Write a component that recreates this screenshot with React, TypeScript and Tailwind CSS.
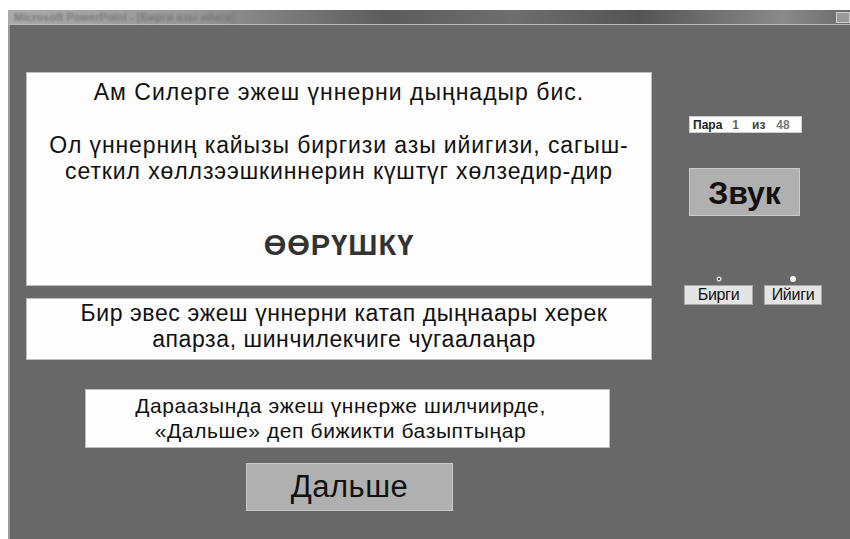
import React from "react";

const font = { fontFamily: '"Liberation Sans", Arial, sans-serif' };

function Panel({ className, children }: { className: string; children: React.ReactNode }) {
  return (
    <div className={`bg-[#fdfdfd] border border-[#bdbdbd] text-[#111] text-center ${className}`}>
      {children}
    </div>
  );
}

export default function App() {
  return (
    <div className="w-[850px] h-[539px] bg-white pt-[10px] pl-[8px] flex flex-col overflow-hidden" style={font}>
      {/* window title bar */}
      <div className="h-[15px] flex items-center bg-[linear-gradient(90deg,#ababab_0%,#979797_22%,#5c5c5c_45%,#6e6e6e_60%,#545454_75%,#8a8a8a_92%,#6a6a6a_100%)] border-b border-[#b8b8b8]">
        <span className="ml-[6px] text-[11px] font-bold text-[#7a7a7a] blur-[1.2px] whitespace-nowrap">
          Microsoft PowerPoint - [Бирги азы ийиги]
        </span>
        <div className="ml-auto w-[14px] h-[11px] bg-[#9a9a9a] border border-[#cfcfcf]" />
      </div>

      {/* slide area */}
      <div className="flex-1 flex bg-[#686868] border-l-2 border-[#9c9c9c] pl-[16px] pt-[47px]">
        <div className="w-[626px] flex flex-col">
          <Panel className="h-[214px] pt-[6px]">
            <p className="text-[23px] leading-[26px] tracking-[1px]">Ам Силерге эжеш үннерни дыңнадыр бис.</p>
            <p className="mt-[27px] text-[23px] leading-[26px] tracking-[0.9px]">
              Ол үннерниң кайызы биргизи азы ийигизи, сагыш-
              <br />
              сеткил хөллзээшкиннерин күштүг хөлзедир-дир
            </p>
            <p className="mt-[44px] text-[29px] leading-[34px] font-bold tracking-[1px] text-[#333]">ӨӨРҮШКҮ</p>
          </Panel>

          <Panel className="mt-[12px] h-[62px] pt-[1px] pl-[10px]">
            <p className="text-[23px] leading-[26px] tracking-[0.6px]">
              Бир эвес эжеш үннерни катап дыңнаары херек
              <br />
              апарза, шинчилекчиге чугаалаңар
            </p>
          </Panel>

          <Panel className="mt-[29px] ml-[59px] w-[525px] h-[59px] pt-[3px] pr-[14px]">
            <p className="text-[21px] leading-[25px] tracking-[0.6px]">
              Дараазында эжеш үннерже шилчиирде,
              <br />
              «Дальше» деп бижикти базыптыңар
            </p>
          </Panel>

          <button className="mt-[15px] ml-[220px] w-[207px] h-[48px] bg-[#b0b0b0] border border-[#c8c8c8] text-[31px] text-[#111] tracking-[0.5px]">
            Дальше
          </button>
        </div>

        <div className="ml-[32px] pt-[44px] flex flex-col">
          <div className="ml-[5px] w-[113px] h-[17px] bg-white border border-[#cfcfcf] flex items-center text-[12px] leading-none font-bold px-[3px]">
            <span className="text-[#222]">Пара</span>
            <span className="ml-[10px] text-[#666]">1</span>
            <span className="ml-[13px] text-[#444]">из</span>
            <span className="ml-[11px] text-[#777]">48</span>
          </div>

          <button className="mt-[35px] ml-[5px] w-[111px] h-[48px] bg-[#b0b0b0] border border-[#cacaca] text-[32px] font-bold text-[#111]">
            Звук
          </button>

          <div className="mt-[60px] flex gap-[11px]">
            <div className="flex flex-col items-center w-[69px]">
              <div className="w-[6px] h-[6px] rounded-full bg-white border border-[#999] flex items-center justify-center">
                <div className="w-[2px] h-[2px] rounded-full bg-[#222]" />
              </div>
              <div className="mt-[3px] w-[69px] h-[20px] bg-[#e4e4e4] border border-[#aaa] text-[16px] leading-[18px] text-center text-[#111] tracking-[-0.3px]">
                Бирги
              </div>
            </div>
            <div className="flex flex-col items-center w-[58px]">
              <div className="w-[6px] h-[6px] rounded-full bg-[#f4f4f4]" />
              <div className="mt-[3px] w-[58px] h-[20px] bg-[#e4e4e4] border border-[#aaa] text-[16px] leading-[18px] text-center text-[#111] tracking-[-0.3px]">
                Ийиги
              </div>
            </div>
          </div>
        </div>
      </div>
    </div>
  );
}
